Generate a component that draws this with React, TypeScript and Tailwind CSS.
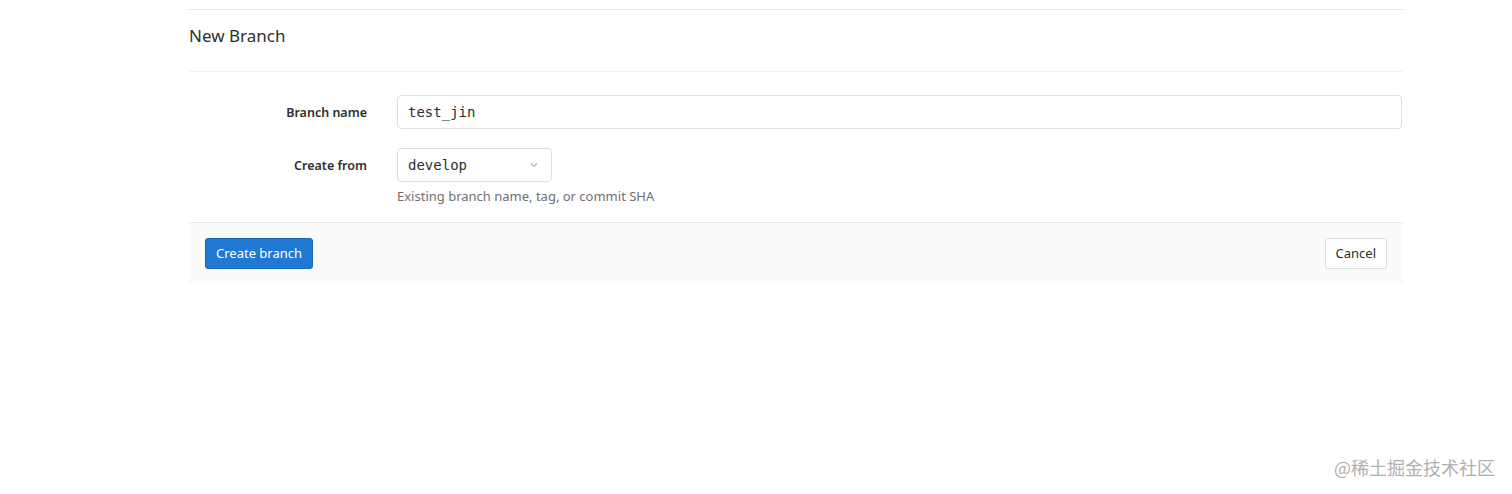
import React from "react"

const sans = { fontFamily: '"Noto Sans", "Open Sans", sans-serif' }
const mono = { fontFamily: '"DejaVu Sans Mono", "Liberation Mono", monospace' }

export default function App() {
  return (
    <div className="relative h-[494px] w-[1512px] bg-white text-[#2e2e2e]" style={sans}>
      <div className="ml-[189px] w-[1214px] pt-[9px]">
        <div className="border-t border-[#e5e5e5]">
          <h3 className="flex h-[61px] items-center pb-[10px] text-[17px] font-normal text-[#2e2e2e]">New Branch</h3>
        </div>
        <form className="border-t border-[#f0f0f0] pt-[23px]">
          <div className="flex items-center">
            <label className="w-[178px] pt-[2px] text-right text-[12.5px] font-semibold">Branch name</label>
            <div
              className="ml-[30px] flex h-[34px] w-[1005px] items-center rounded-[4px] border border-[#dfdfdf] px-[10px] text-[14px] leading-[20px] text-[#2e2e2e]"
              style={mono}
            >
              test_jin
            </div>
          </div>
          <div className="mt-[19px] flex items-start">
            <label className="flex h-[34px] w-[178px] items-center justify-end pt-[2px] text-[12.5px] font-semibold">Create from</label>
            <div className="ml-[30px]">
              <div className="flex h-[34px] w-[155px] items-center justify-between rounded-[4px] border border-[#dfdfdf] pl-[10px] pr-[12px]">
                <span className="text-[14px]" style={mono}>develop</span>
                <svg width="10" height="10" viewBox="0 0 10 10" fill="none">
                  <path d="M2 3.5 L5 6.5 L8 3.5" stroke="#b5b5b5" strokeWidth="1.2" />
                </svg>
              </div>
              <p className="mt-[5px] text-[13px] text-[#707070]">Existing branch name, tag, or commit SHA</p>
            </div>
          </div>
          <div className="mt-[15px] flex h-[62px] items-center justify-between border-t border-[#e5e5e5] bg-[#fafafa] px-[16px]">
            <button
              type="button"
              className="h-[31px] rounded-[3px] border border-[#1b69b6] bg-[#1f78d1] px-[10px] pt-[2px] text-[13px] text-white"
            >
              Create branch
            </button>
            <button
              type="button"
              className="h-[31px] rounded-[3px] border border-[#dfdfdf] bg-white px-[10px] pt-[2px] text-[13px] text-[#2e2e2e]"
            >
              Cancel
            </button>
          </div>
        </form>
      </div>
      <div
        className="absolute right-[17px] top-[454px] text-[18px] text-[#b0b0b0]"
        style={{ fontFamily: '"Noto Sans CJK SC", sans-serif' }}
      >
        @稀土掘金技术社区
      </div>
    </div>
  )
}
